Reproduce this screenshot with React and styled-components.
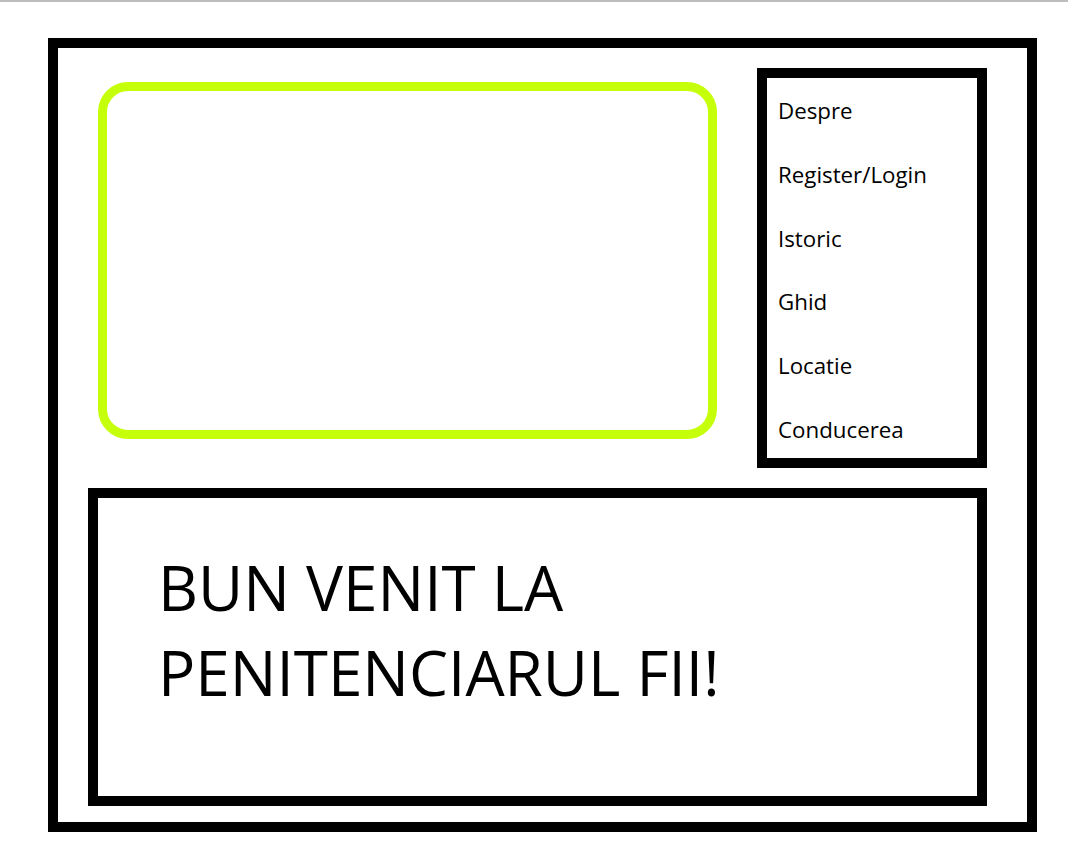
import React from 'react'
import styled, {createGlobalStyle} from 'styled-components'

const GlobalStyle = createGlobalStyle`
    html, body {
        margin : 0;
        padding : 0;
        background-color : white;
    }
    body {
        border-top : 2px solid #bdbdbd;
        font-family : "Open Sans", "Noto Sans", "Liberation Sans", sans-serif;
        color : black;
    }
`;

const Page = styled.div`
    padding-top : 36px;
    padding-left : 48px;
`;

const Frame = styled.div`
    box-sizing : border-box;
    width : 989px;
    height : 794px;
    border : 10px solid black;
    padding : 20px 40px 16px 30px;
    display : flex;
    flex-direction : column;
    gap : 20px;
`;

const TopRow = styled.div`
    display : flex;
    justify-content : space-between;
    align-items : flex-start;
`;

const Banner = styled.div`
    box-sizing : border-box;
    width : 619px;
    height : 357px;
    margin : 14px 0 0 10px;
    border : 9px solid #c6ff0a;
    border-radius : 30px;
`;

const Nav = styled.nav`
    box-sizing : border-box;
    width : 230px;
    height : 400px;
    border : 10px solid black;
    padding : 20px 0 0 11px;
    display : flex;
    flex-direction : column;
    gap : 37.8px;
`;

const NavLink = styled.a`
    font-size : 22.3px;
    line-height : 26px;
    color : black;
    text-decoration : none;
    cursor : pointer;
`;

const Welcome = styled.div`
    box-sizing : border-box;
    width : 899px;
    height : 318px;
    border : 10px solid black;
    padding : 47px 0 0 60px;
`;

const Heading = styled.h1`
    margin : 0;
    font-size : 62px;
    font-weight : 400;
    line-height : 85px;
`;

const links = ["Despre", "Register/Login", "Istoric", "Ghid", "Locatie", "Conducerea"]

const App = () => {
    return(
        <Page>
            <GlobalStyle/>
            <Frame>
                <TopRow>
                    <Banner/>
                    <Nav>
                        {links.map((l)=> <NavLink key={l}>{l}</NavLink>)}
                    </Nav>
                </TopRow>
                <Welcome>
                    <Heading>BUN VENIT LA<br/>PENITENCIARUL FII!</Heading>
                </Welcome>
            </Frame>
        </Page>
    )
}

export default App
